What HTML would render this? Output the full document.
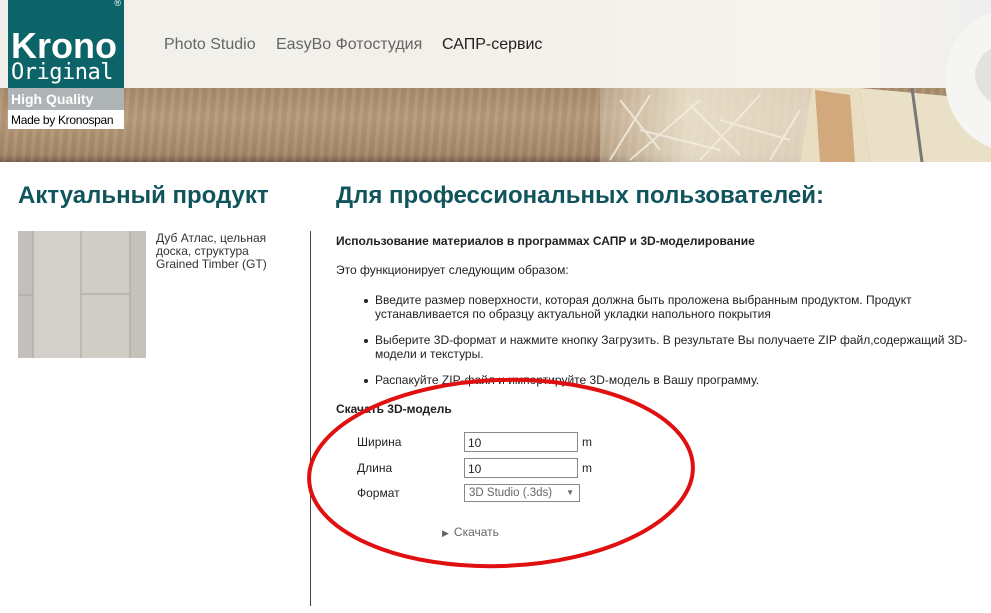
<!DOCTYPE html>
<html><head><meta charset="utf-8"><style>
*{margin:0;padding:0;box-sizing:border-box}
body{width:991px;height:613px;overflow:hidden;background:#fff;font-family:"Liberation Sans",Arial,sans-serif;position:relative;color:#222}
.ban{position:absolute;left:0;top:0;width:991px;height:162px;overflow:hidden}
.top{position:absolute;left:0;top:0;width:991px;height:88px;background:linear-gradient(90deg,#f1efea,#f4f1ea 60%,#f8f5ee 85%,#eee 100%)}
.wood{position:absolute;left:0;top:88px;width:991px;height:74px;background:
repeating-linear-gradient(95deg,rgba(255,255,255,.05) 0 4px,rgba(0,0,0,.04) 4px 9px),
linear-gradient(180deg,#a88b6c,#b89b7a 40%,#a5876a 90%,#7a6250)}
.fib{position:absolute;left:600px;top:88px;width:220px;height:74px;background:linear-gradient(90deg,rgba(235,225,205,.3),rgba(240,232,212,.85) 40%,rgba(235,225,205,.8));}
.logo{position:absolute;left:8px;top:0;width:116px;height:129px}
.lt{position:absolute;left:0;top:0;width:116px;height:88px;background:#0c6468;color:#fff;overflow:hidden}
.lg{position:absolute;left:0;top:88px;width:116px;height:22px;background:#aeb3b5;color:#fff;font-weight:bold;font-size:14px;padding:3px 3px}
.lw{position:absolute;left:0;top:110px;width:116px;height:19px;background:#fff;color:#000;font-size:12px;padding:3px 3px;white-space:nowrap;letter-spacing:-.3px}
.nav{position:absolute;top:36px;font-size:16px;color:#666}
h2{position:absolute;font-size:24px;color:#10545c;font-weight:bold;top:182px}
.s{font-size:12px;position:absolute}
ul{position:absolute;left:375px;font-size:12px;list-style:none}
li{position:relative;margin-bottom:12px;line-height:14px;width:605px}
li:before{content:"";position:absolute;left:-11px;top:6px;width:4px;height:4px;border-radius:50%;background:#222}
.inp{position:absolute;left:464px;width:114px;height:20px;border:1px solid #888;font-size:12px;padding:3px 3px;background:#fff}
</style></head><body>
<div class="ban"><div class="top"></div><div class="wood"></div><div class="fib"></div>
<svg style="position:absolute;left:0;top:0" width="991" height="162">
<g stroke="#f4efe2" stroke-width="2" opacity=".8">
<line x1="610" y1="160" x2="650" y2="95"/><line x1="630" y1="160" x2="700" y2="100"/><line x1="660" y1="150" x2="620" y2="100"/><line x1="700" y1="160" x2="760" y2="95"/><line x1="740" y1="155" x2="690" y2="105"/><line x1="770" y1="160" x2="800" y2="110"/><line x1="720" y1="120" x2="790" y2="140"/><line x1="640" y1="130" x2="720" y2="150"/></g>
<path d="M812 88 L860 88 L870 162 L800 162Z" fill="#e9ddc2"/>
<path d="M860 88 L991 100 L991 162 L870 162Z" fill="#eae0c8"/>
<path d="M815 90 L850 95 L855 162 L820 162Z" fill="#c8915f" opacity=".7"/>
<line x1="912" y1="88" x2="922" y2="162" stroke="#777" stroke-width="3"/>
<ellipse cx="1015" cy="80" rx="70" ry="72" fill="#f5f5f3"/>
<ellipse cx="1020" cy="75" rx="45" ry="35" fill="#e2e2e0"/>
</svg></div>
<div class="logo"><div class="lt">
<div style="position:absolute;right:3px;top:-2px;font-size:9px">®</div>
<div style="position:absolute;left:3px;top:28px;font-size:36px;font-weight:bold;line-height:36px">Krono</div>
<div style="position:absolute;left:3px;top:60px;font-size:22px;font-family:'DejaVu Sans Mono',monospace;line-height:26px;letter-spacing:-.5px">Original</div>
</div><div class="lg">High Quality</div><div class="lw">Made by Kronospan</div></div>
<div class="nav" style="left:164px">Photo Studio</div>
<div class="nav" style="left:276px">EasyBo Фотостудия</div>
<div class="nav" style="left:442px;color:#222">САПР-сервис</div>
<h2 style="left:18px">Актуальный продукт</h2>
<h2 style="left:336px">Для профессиональных пользователей:</h2>
<svg style="position:absolute;left:18px;top:231px" width="128" height="127">
<rect width="128" height="127" fill="#cfcac4"/>
<rect x="0" width="15" height="127" fill="#c4bfba"/>
<rect x="15" width="48" height="127" fill="#d3cfca"/>
<rect x="63" width="49" height="127" fill="#d0ccc6"/>
<rect x="112" width="16" height="127" fill="#c6c1bb"/>
<g stroke="#a9a49f" stroke-width="1"><line x1="15" y1="0" x2="15" y2="127"/><line x1="63" y1="0" x2="63" y2="127"/><line x1="112" y1="0" x2="112" y2="127"/><line x1="0" y1="64" x2="15" y2="64"/><line x1="63" y1="63" x2="112" y2="63"/></g>
</svg>
<div class="s" style="left:156px;top:232px;line-height:13px;color:#333">Дуб Атлас, цельная<br>доска, структура<br>Grained Timber (GT)</div>
<div style="position:absolute;left:310px;top:231px;width:1px;height:375px;background:#444"></div>
<div class="s" style="left:336px;top:234px;font-weight:bold">Использование материалов в программах САПР и 3D-моделирование</div>
<div class="s" style="left:336px;top:263px">Это функционирует следующим образом:</div>
<ul style="top:293px"><li>Введите размер поверхности, которая должна быть проложена выбранным продуктом. Продукт устанавливается по образцу актуальной укладки напольного покрытия</li>
<li>Выберите 3D-формат и нажмите кнопку Загрузить. В результате Вы получаете ZIP файл,содержащий 3D-модели и текстуры.</li>
<li>Распакуйте ZIP-файл и импортируйте 3D-модель в Вашу программу.</li></ul>
<div class="s" style="left:336px;top:402px;font-weight:bold">Скачать 3D-модель</div>
<div class="s" style="left:357px;top:435px">Ширина</div>
<div class="s" style="left:357px;top:461px">Длина</div>
<div class="s" style="left:357px;top:486px">Формат</div>
<div class="inp" style="top:432px">10</div><div class="s" style="left:582px;top:435px">m</div>
<div class="inp" style="top:458px">10</div><div class="s" style="left:582px;top:461px">m</div>
<div class="inp" style="top:484px;width:116px;height:18px;color:#666;padding:2px 4px;font-size:11.5px">3D Studio (.3ds)<span style="position:absolute;right:5px;top:3px;font-size:8px">▼</span></div>
<div class="s" style="left:442px;top:525px;color:#666"><span style="font-size:9px;margin-right:5px">▶</span>Скачать</div>
<svg style="position:absolute;left:0;top:0" width="991" height="613"><ellipse cx="501" cy="473" rx="192" ry="93" transform="rotate(-2 501 473)" fill="none" stroke="#e01010" stroke-width="4"/></svg>
</body></html>
